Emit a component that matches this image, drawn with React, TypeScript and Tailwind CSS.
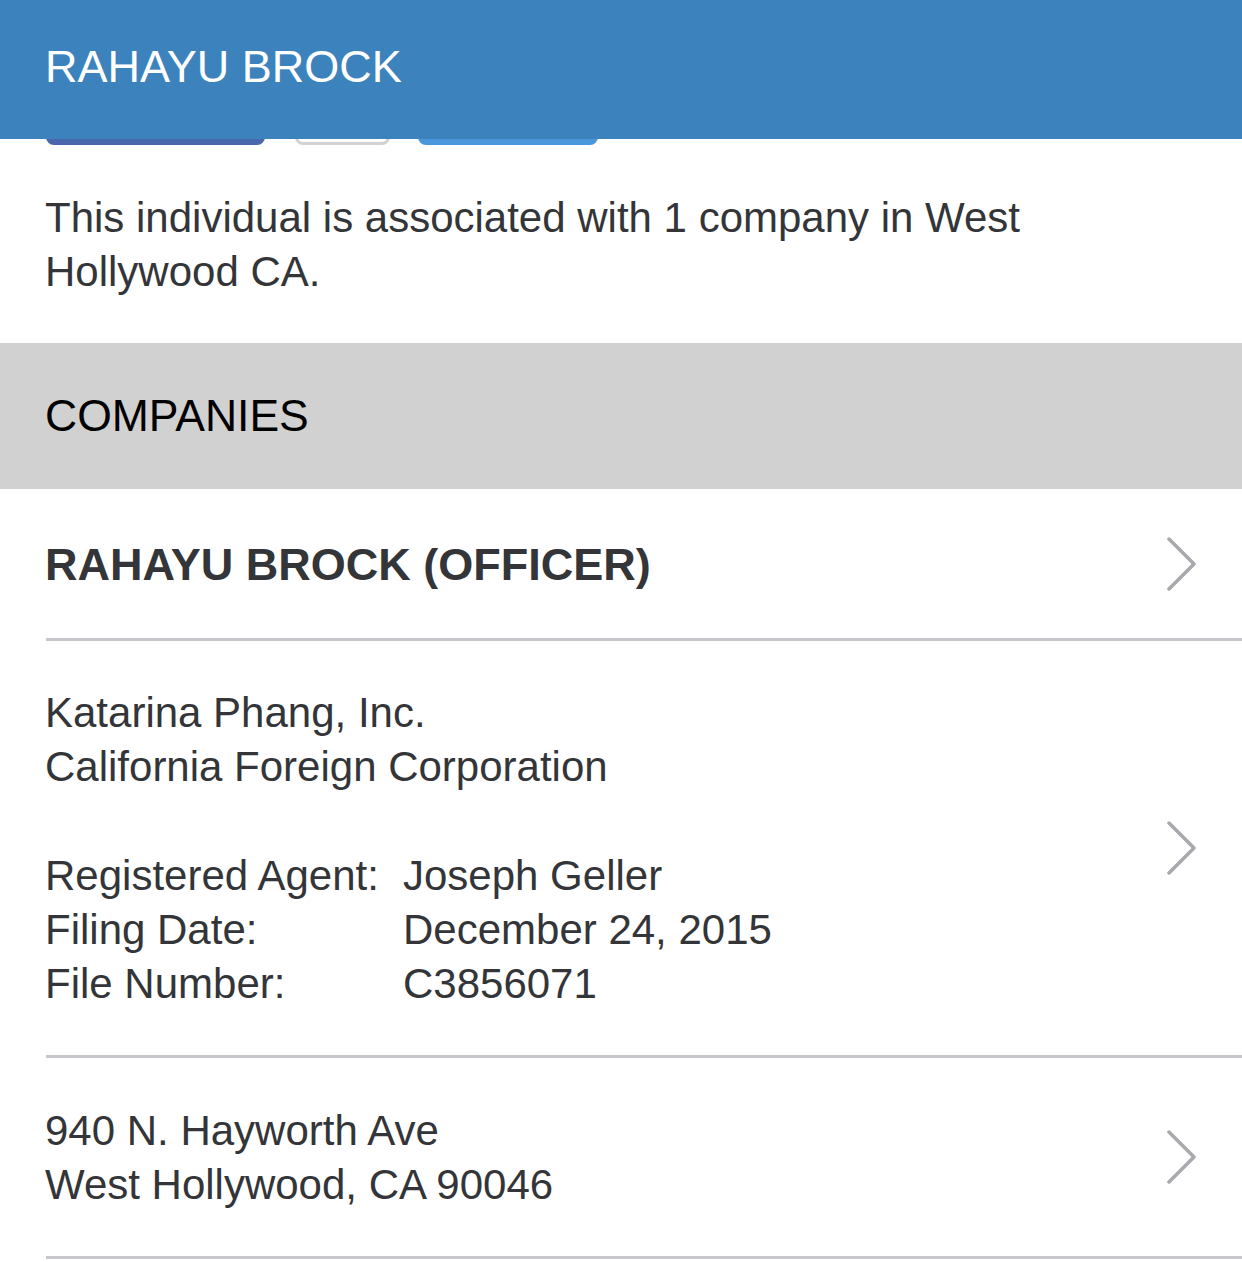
import React from "react"

const font = { fontFamily: '"Liberation Sans", Arial, Helvetica, sans-serif' }

function Chevron() {
  return (
    <svg width="32" height="54" viewBox="0 0 32 54" className="shrink-0" aria-hidden>
      <path d="M3 2 L28 27 L3 52" fill="none" stroke="#a9a9ad" strokeWidth="3.5" strokeLinecap="round" strokeLinejoin="round" />
    </svg>
  )
}

function Row({ children }: { children: React.ReactNode }) {
  return (
    <div className="ml-[46px] flex items-center border-b-[3px] border-[#c8c8cc] pr-[44px]">
      <div className="flex-1">{children}</div>
      <Chevron />
    </div>
  )
}

export default function App() {
  return (
    <div className="min-h-screen w-full bg-white text-[#333538]" style={font}>
      <header className="relative z-10 flex h-[139px] items-center bg-[#3c83bd] px-[45px] pb-[6px]">
        <h1 className="text-[45px] leading-none text-white">RAHAYU BROCK</h1>
      </header>

      <div className="-mt-[54px] flex px-[46px]">
        <button className="h-[60px] w-[219px] rounded-[8px] bg-[#4a66ad]" />
        <button className="ml-[30px] h-[60px] w-[95px] rounded-[8px] border-[3px] border-[#d2d2d2] bg-white" />
        <button className="ml-[28px] h-[60px] w-[180px] rounded-[8px] bg-[#4a96dd]" />
      </div>

      <p className="px-[45px] pb-[44px] pt-[46px] text-[42px] leading-[54px]">
        This individual is associated with 1 company in West Hollywood CA.
      </p>

      <div className="bg-[#d1d1d1] px-[45px] py-[46px] text-[44.5px] leading-[54px] text-black">COMPANIES</div>

      <Row>
        <div className="-ml-px pb-[46px] pt-[49px] text-[45px] font-bold leading-[54px]">RAHAYU BROCK (OFFICER)</div>
      </Row>

      <Row>
        <div className="-ml-px pb-[44px] pt-[45px] text-[42px] leading-[54.3px]">
          <div>Katarina Phang, Inc.</div>
          <div>California Foreign Corporation</div>
          <div className="h-[54px]" />
          <div className="grid grid-cols-[358px_1fr]">
            <div>Registered Agent:</div>
            <div>Joseph Geller</div>
            <div>Filing Date:</div>
            <div>December 24, 2015</div>
            <div>File Number:</div>
            <div>C3856071</div>
          </div>
        </div>
      </Row>

      <Row>
        <div className="-ml-px pb-[44px] pt-[46px] text-[42px] leading-[54px]">
          <div>940 N. Hayworth Ave</div>
          <div>West Hollywood, CA 90046</div>
        </div>
      </Row>
    </div>
  )
}
